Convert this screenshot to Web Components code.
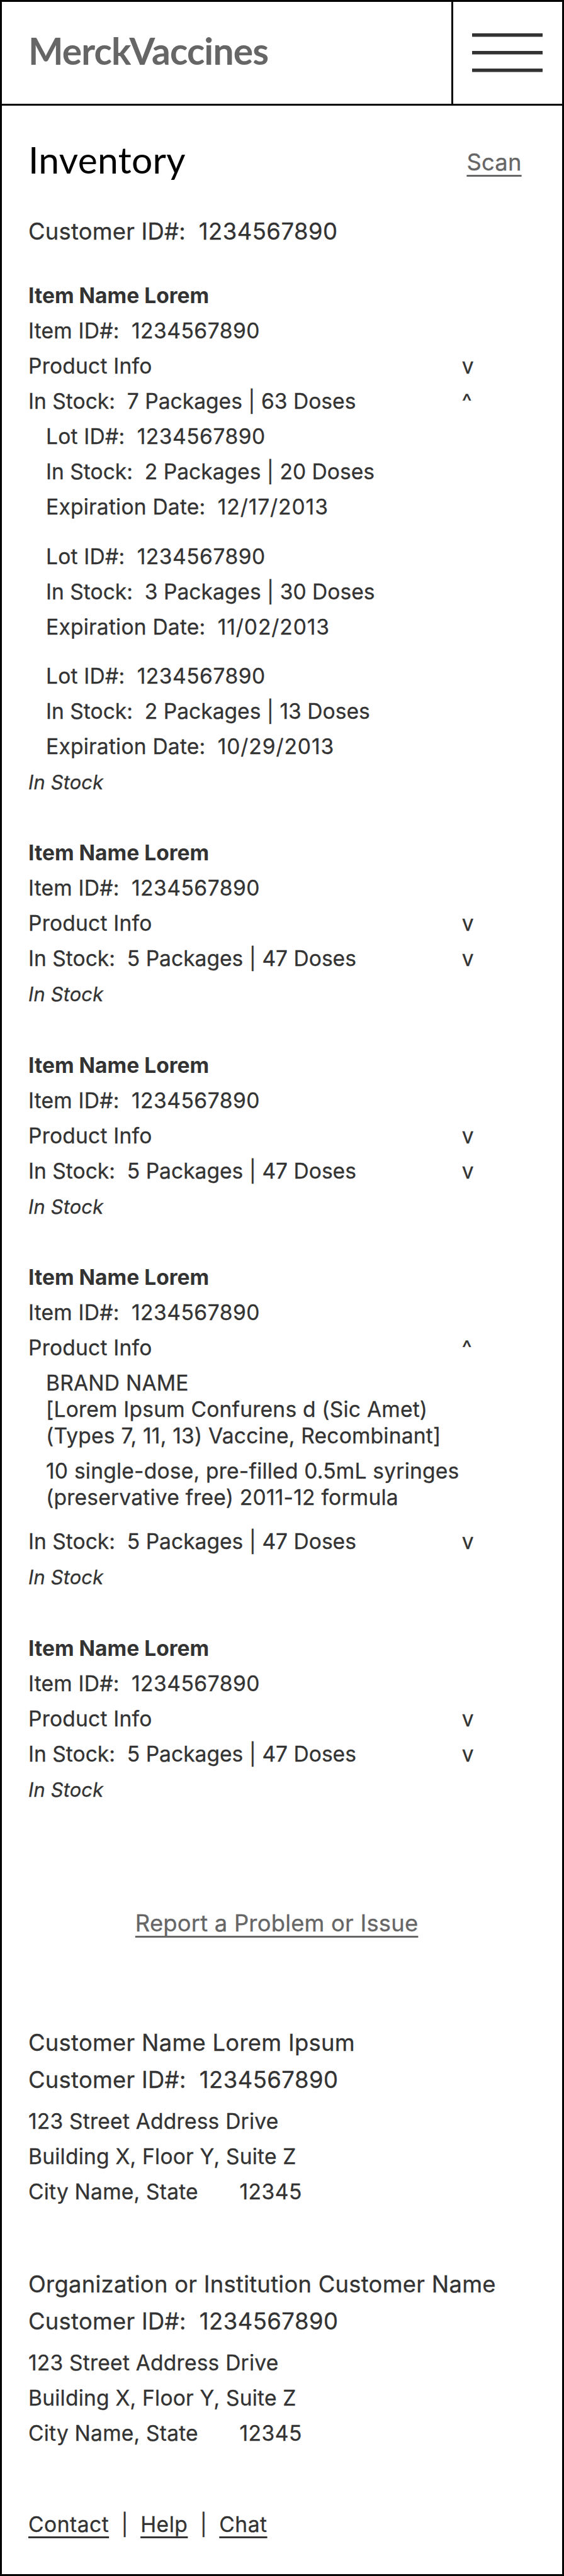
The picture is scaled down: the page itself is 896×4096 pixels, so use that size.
<!DOCTYPE html>
<html lang="en">
<head>
  <meta charset="utf-8">
  <title>Inventory</title>
  <style>
    :root {
      --u: 2.8px;
      --line: 3px;
      --ink: #333;
      --muted: #666;
    }
    html, body {
      margin: 0;
      background: #fff;
    }
    body {
      font-family: Inter, "Liberation Sans", sans-serif;
      font-size: calc(12 * var(--u));
      line-height: calc(20 * var(--u));
      letter-spacing: 0.2px;
      -webkit-text-stroke-width: 0.3px;
      color: var(--ink);
    }
  </style>
</head>
<body>
  <app-shell></app-shell>

  <template id="app-shell">
    <style>
      :host {
        display: flex;
        flex-direction: column;
        box-sizing: border-box;
        height: 4096px;
        border: var(--line) solid #000;
      }
      main {
        padding: 0 calc(21 * var(--u)) 0 calc(15 * var(--u));
      }
      .title {
        display: flex;
        justify-content: space-between;
        align-items: flex-start;
        padding-top: 44.4px;
        padding-right: calc(2 * var(--u));
      }
      .title text-link { margin-top: 18px; }
      h1 {
        margin: 0;
        font: 400 calc(21 * var(--u))/calc(30 * var(--u)) Lato, sans-serif;
        letter-spacing: 0.3px;
        -webkit-text-stroke-width: 0;
        color: #000;
      }
      .customer {
        font-size: calc(13 * var(--u));
        margin-top: 43.2px;
      }
      .items {
        margin-top: 46.6px;
        display: flex;
        flex-direction: column;
        gap: calc(20.5 * var(--u));
      }
      .report {
        text-align: center;
        margin-top: 157.8px;
      }
      .addresses {
        margin-top: 132px;
        display: flex;
        flex-direction: column;
        gap: 90px;
      }
      .links { margin-top: 89.6px; }
    </style>
    <app-header>MerckVaccines</app-header>
    <main>
      <div class="title"><h1>Inventory</h1><text-link muted>Scan</text-link></div>
      <div class="customer">Customer ID#:&nbsp; <id-number>1234567890</id-number></div>
      <div class="items">
        <inventory-item stock="7 Packages | 63 Doses" stock-open>
          <lot-info slot="lots" stock="2 Packages | 20 Doses" expires="12/17/2013"></lot-info>
          <lot-info slot="lots" stock="3 Packages | 30 Doses" expires="11/02/2013"></lot-info>
          <lot-info slot="lots" stock="2 Packages | 13 Doses" expires="10/29/2013"></lot-info>
        </inventory-item>
        <inventory-item stock="5 Packages | 47 Doses"></inventory-item>
        <inventory-item stock="5 Packages | 47 Doses"></inventory-item>
        <inventory-item stock="5 Packages | 47 Doses" info-open>
          <product-info slot="info">
            <div>BRAND NAME<br>[Lorem Ipsum Confurens d (Sic Amet)<br>(Types 7, 11, 13) Vaccine, Recombinant]</div>
            <div>10 single-dose, pre-filled 0.5mL syringes<br>(preservative free) 2011-12 formula</div>
          </product-info>
        </inventory-item>
        <inventory-item stock="5 Packages | 47 Doses"></inventory-item>
      </div>
      <div class="report"><text-link muted>Report a Problem or Issue</text-link></div>
      <div class="addresses">
        <customer-address>Customer Name Lorem Ipsum</customer-address>
        <customer-address>Organization or Institution Customer Name</customer-address>
      </div>
      <div class="links"><text-link small>Contact</text-link>&nbsp; | &nbsp;<text-link small>Help</text-link>&nbsp; | &nbsp;<text-link small>Chat</text-link></div>
    </main>
  </template>

  <template id="app-header">
    <style>
      :host {
        display: flex;
        flex: none;
        box-sizing: border-box;
        height: 165px;
        border-bottom: var(--line) solid #000;
      }
      .brand {
        flex: 1;
        padding-left: calc(15 * var(--u));
        font: 700 calc(21 * var(--u))/155px Lato, sans-serif;
        letter-spacing: -0.015em;
        -webkit-text-stroke-width: 0;
        color: var(--muted);
      }
      .menu {
        width: calc(63 * var(--u));
        box-sizing: border-box;
        border-left: var(--line) solid #000;
        display: flex;
        align-items: center;
        justify-content: center;
      }
      svg {
        width: calc(40 * var(--u));
        height: calc(22 * var(--u));
      }
    </style>
    <div class="brand"><slot></slot></div>
    <div class="menu">
      <svg viewBox="0 0 40 22" stroke="#333" stroke-width="2"><path d="M0 1h40M0 11h40M0 21h40"/></svg>
    </div>
  </template>

  <!-- slot stays on the closing line, a trailing newline would be underlined -->
  <template id="text-link"><style>
      :host {
        display: inline;
        font-size: calc(13 * var(--u));
        text-decoration: underline;
        text-underline-offset: 7.2px;
        text-decoration-thickness: 2.6px;
        cursor: pointer;
      }
      :host([muted]) { color: var(--muted); }
      :host([small]) {
        font-size: calc(12 * var(--u));
        letter-spacing: 0.5px;
        text-underline-offset: 6.5px;
      }
    </style><slot></slot></template>

  <template id="id-number"><style>
      :host {
        display: inline;
        letter-spacing: 0.5px;
      }
    </style><slot></slot></template>

  <template id="inventory-item">
    <style>
      :host { display: block; }
      .name { font-weight: 700; letter-spacing: 0; -webkit-text-stroke-width: 0; }
      .row { display: flex; }
      .row > span:first-child { width: calc(246 * var(--u)); }
      .stock { letter-spacing: 0; }
      .status {
        font-size: calc(11 * var(--u));
        font-style: italic;
        line-height: 54px;
        padding-top: 2px;
      }
    </style>
    <div class="name">Item Name Lorem</div>
    <div>Item ID#:&nbsp; <id-number>1234567890</id-number></div>
    <div class="row"><span>Product Info</span><span id="infoMark"></span></div>
    <slot name="info"></slot>
    <div class="row stock"><span>In Stock:&nbsp; <span id="stock"></span></span><span id="stockMark"></span></div>
    <slot name="lots"></slot>
    <div class="status">In Stock</div>
  </template>

  <template id="lot-info">
    <style>
      :host {
        display: block;
        padding-left: calc(10 * var(--u));
      }
      :host(:not(:last-child)) { margin-bottom: calc(8 * var(--u)); }
      .stock { letter-spacing: 0; }
      #expires { letter-spacing: 0.9px; }
    </style>
    <div>Lot ID#:&nbsp; <id-number>1234567890</id-number></div>
    <div class="stock">In Stock:&nbsp; <span id="stock"></span></div>
    <div>Expiration Date:&nbsp; <id-number id="expires"></id-number></div>
  </template>

  <template id="product-info">
    <style>
      :host {
        display: flex;
        flex-direction: column;
        gap: calc(5 * var(--u));
        padding: calc(2.5 * var(--u)) 0 calc(7.5 * var(--u)) calc(10 * var(--u));
        line-height: calc(15 * var(--u));
      }
    </style>
    <slot></slot>
  </template>

  <template id="customer-address">
    <style>
      :host { display: block; }
      .head {
        font-size: calc(13 * var(--u));
        line-height: calc(21 * var(--u));
        letter-spacing: 0.26px;
        margin-bottom: 8px;
      }
      .zip { margin-left: calc(23.4 * var(--u)); }
    </style>
    <div class="head"><slot></slot><br>Customer ID#:&nbsp; <id-number>1234567890</id-number></div>
    <div>123 Street Address Drive</div>
    <div>Building X, Floor Y, Suite Z</div>
    <div>City Name, State<id-number class="zip">12345</id-number></div>
  </template>

  <script>
    class BaseElement extends HTMLElement {
      constructor() {
        super();
        const t = document.getElementById(this.localName);
        this.attachShadow({mode: 'open'}).appendChild(t.content.cloneNode(true));
      }

      setText(id, value) {
        this.shadowRoot.getElementById(id).textContent = value;
      }
    }

    class TextLink extends BaseElement {}
    class IdNumber extends BaseElement {}
    class AppHeader extends BaseElement {}
    class ProductInfo extends BaseElement {}
    class CustomerAddress extends BaseElement {}
    class AppShell extends BaseElement {}

    class LotInfo extends BaseElement {
      connectedCallback() {
        this.setText('stock', this.getAttribute('stock'));
        this.setText('expires', this.getAttribute('expires'));
      }
    }

    class InventoryItem extends BaseElement {
      connectedCallback() {
        this.setText('stock', this.getAttribute('stock'));
        this.setText('infoMark', this.hasAttribute('info-open') ? '^' : 'v');
        this.setText('stockMark', this.hasAttribute('stock-open') ? '^' : 'v');
      }
    }

    customElements.define('text-link', TextLink);
    customElements.define('id-number', IdNumber);
    customElements.define('app-header', AppHeader);
    customElements.define('product-info', ProductInfo);
    customElements.define('customer-address', CustomerAddress);
    customElements.define('lot-info', LotInfo);
    customElements.define('inventory-item', InventoryItem);
    customElements.define('app-shell', AppShell);
  </script>
</body>
</html>
